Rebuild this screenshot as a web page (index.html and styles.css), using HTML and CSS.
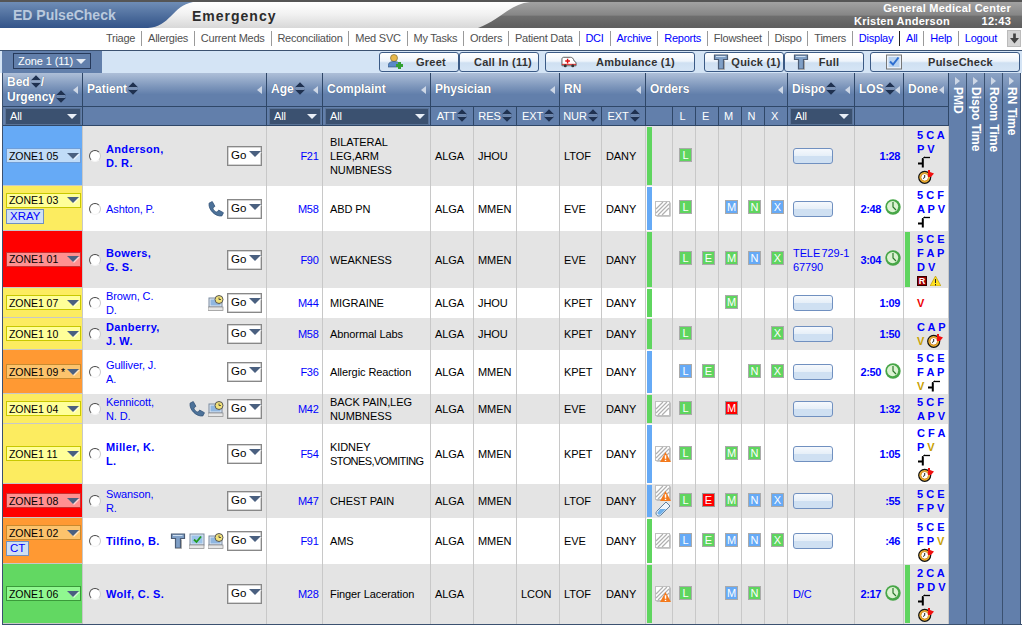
FILE: index.html
```html
<!DOCTYPE html>
<html lang="en">
<head>
<meta charset="utf-8">
<title>ED PulseCheck</title>
<link rel="stylesheet" href="styles.css">
</head>
<body>
<svg class="defs" width="0" height="0">
  <defs>
    <linearGradient id="gBlue" x1="0" y1="0" x2="0" y2="1"><stop offset="0" stop-color="#6f8db6"/><stop offset=".6" stop-color="#4a6a9a"/><stop offset="1" stop-color="#33548a"/></linearGradient>
    <linearGradient id="gGrey" x1="0" y1="0" x2="0" y2="1"><stop offset="0" stop-color="#a2a2a2"/><stop offset=".5" stop-color="#868686"/><stop offset=".55" stop-color="#6e6e6e"/><stop offset="1" stop-color="#5e5e5e"/></linearGradient>
    <symbol id="sort" viewBox="0 0 11 14"><path d="M5.500 0 11 5.500H0ZM5.500 14 0 8.500H11Z" fill="#1f3150"/><path d="M1 6H10M1 8H10" stroke="#9fb2cf" stroke-width=".5"/></symbol>
    <symbol id="phone" viewBox="0 0 15 15"><path d="M1 2 4 .5 6.500 5 4.500 6.500C5 8.500 6.500 10 8.500 10.500L10 8.500 14.500 11 13 14C7 15 0 8 1 2Z" fill="#4d7299" stroke="#2f4f75" stroke-width=".7"/></symbol>
    <symbol id="step" viewBox="0 0 14 12"><path d="M13 1.500H7" fill="none" stroke="#000" stroke-width="1.300"/><path d="M5.800 2.500V11.500M1 7.500H5" fill="none" stroke="#000" stroke-width="2"/><path d="M5 3 7.500 1" stroke="#000" fill="none"/></symbol>
    <symbol id="watch" viewBox="0 0 16 14"><circle cx="6.700" cy="7.300" r="6" fill="#f2b431" stroke="#111" stroke-width="1.200"/><circle cx="6.700" cy="7.300" r="3.800" fill="#fff" stroke="#c77a08" stroke-width=".8"/><path d="M6.700 5V7.500L5 8.500" fill="none" stroke="#222"/><path d="M10 0H12V2L16 3.500 13 7H10Z" fill="#f01010"/></symbol>
    <symbol id="clock" viewBox="0 0 16 16"><circle cx="8" cy="8" r="7.700" fill="#47a647"/><circle cx="7.600" cy="7.600" r="5.600" fill="#dcf2d2"/><path d="M8 3V8L11 11" fill="none" stroke="#2b7a2b" stroke-width="1.200"/></symbol>
    <symbol id="pcclock" viewBox="0 0 16 16"><rect x="1" y="3" width="13" height="9" fill="#dfe8f3" stroke="#7a8aa0"/><rect x="2.500" y="4.500" width="10" height="6" fill="#8fb6e0"/><rect y="12" width="15" height="3.500" fill="#e6e6e6" stroke="#8a8a8a" stroke-width=".7"/><circle cx="11" cy="4.500" r="4" fill="#f2e27a" stroke="#555"/><path d="M11 2.500V4.500H13" fill="none" stroke="#333" stroke-width=".8"/></symbol>
    <symbol id="pccheck" viewBox="0 0 16 16"><rect x="1" y="1" width="14" height="11" fill="#dfe8f3" stroke="#7a8aa0"/><rect x="2.500" y="2.500" width="11" height="8" fill="#9cc3ea"/><path d="M5 6.500 7.500 9 12 3.500" fill="none" stroke="#1f9a1f" stroke-width="1.800"/><rect y="12" width="15" height="3.500" fill="#e6e6e6" stroke="#8a8a8a" stroke-width=".7"/></symbol>
    <symbol id="tee" viewBox="0 0 15 16"><path d="M1 1H14V5.500H10V15H5V5.500H1Z" fill="#7f9fc6" stroke="#4b5c75" stroke-width="1.200"/><path d="M2.500 2.500H12" stroke="#cfe0f2" stroke-width="1"/><path d="M11 6.500V15.500H6" fill="none" stroke="#aaa"/></symbol>
    <symbol id="note" viewBox="0 0 16 16"><rect x="1.500" y="1.500" width="14" height="14" fill="#9a9a9a"/><rect x=".5" y=".5" width="14" height="14" fill="#fff" stroke="#c0c0c0"/><path d="M1 8 8 1M1 12 12 1M3 14 14 3M7 14 14 7" stroke="#b0b0b0" stroke-width="1.200"/></symbol>
    <symbol id="warn" viewBox="0 0 12 11"><path d="M6 0 12 11H0Z" fill="#f47a1c"/><path d="M6 3.500V7.500M6 8.500V10" stroke="#fff" stroke-width="1.600"/></symbol>
    <symbol id="notewarn" viewBox="0 0 16 16"><use href="#note" width="16" height="16"/><use href="#warn" x="5" y="6" width="11" height="10"/></symbol>
    <symbol id="tube" viewBox="0 0 16 16"><path d="M11 1 15 5 6 14C4 16 1 15 1 12 1 11 2 10 2 10Z" fill="#eef4fb" stroke="#5f7f9f"/><path d="M5 8H11L6 13C4.500 14.500 2 13.500 2.500 11.500Z" fill="#6fb0ea"/></symbol>
    <symbol id="yield" viewBox="0 0 11 10"><path d="M5.500 0 11 10H0Z" fill="#ffe020" stroke="#b09000" stroke-width=".6"/><path d="M5.500 3V7M5.500 8V9.500" stroke="#222" stroke-width="1"/></symbol>
    <symbol id="greet" viewBox="0 0 16 16"><circle cx="6" cy="4" r="3.500" fill="#e8b84a" stroke="#6a5a2a" stroke-width=".6"/><path d="M0 13C0 8 3 7.500 6 7.500S12 8 12 13Z" fill="#5a8ac8" stroke="#2f4f75" stroke-width=".6"/><path d="M11.500 8V15M8 11.500H15" stroke="#33a033" stroke-width="3"/></symbol>
    <symbol id="amb" viewBox="0 0 17 12"><path d="M1 3C1 1.500 2 1 3 1H10C12 1 13 2 14 5L16 6.500V10H1Z" fill="#fff" stroke="#555"/><path d="M7 2.500V7.500M4.500 5H9.500" stroke="#e01010" stroke-width="1.500"/><path d="M1 8.500H16" stroke="#e01010"/><circle cx="4.500" cy="10" r="1.600" fill="#333"/><circle cx="12.500" cy="10" r="1.600" fill="#333"/></symbol>
    <symbol id="check" viewBox="0 0 16 15"><rect x=".5" y=".5" width="15" height="14" fill="#e8f0fa" stroke="#777"/><rect x="2.500" y="2.500" width="11" height="10" fill="#b9d3f0"/><path d="M4 7 7 10 12.500 3" fill="none" stroke="#2f6fd0" stroke-width="2"/></symbol>
    <symbol id="down" viewBox="0 0 10 11"><path d="M3.500 0H6.500V5H10L5 11 0 5H3.500Z" fill="#444"/></symbol>
  </defs>
</svg>
<div class="app">
  <header class="titlebar">
    <svg class="title-art" viewBox="0 0 1022 26" preserveAspectRatio="none" aria-hidden="true">
      <path d="M0 0H193C172 4 170 25 148 26H0Z" fill="url(#gBlue)"/>
      <path d="M478 26C500 18 510 2 530 0H1022V26Z" fill="url(#gGrey)"/>
    </svg>
    <div class="brand">ED PulseCheck</div>
    <div class="dept">Emergency</div>
    <div class="site">
      <div>General Medical Center</div>
      <div class="site-line"><span>Kristen Anderson</span><span>12:43</span></div>
    </div>
  </header>
  <nav class="nav">
    <a>Triage</a><a>Allergies</a><a>Current Meds</a><a>Reconciliation</a><a>Med SVC</a><a>My Tasks</a><a>Orders</a><a>Patient Data</a><a class="on">DCI</a><a class="on">Archive</a><a class="on">Reports</a><a>Flowsheet</a><a>Dispo</a><a>Timers</a><a class="on strong">Display</a><a class="on">All</a><a class="on">Help</a><a class="on end">Logout</a>
    <span class="scroll"><svg class="down"><use href="#down"/></svg></span>
  </nav>
  <div class="toolbar">
    <div class="zonebox"><div class="zonesel">Zone 1 (11)<i class="tri-w"></i></div></div>
    <div class="tools">
      <div class="btngroup">
        <button class="btn w80"><svg class="bi"><use href="#greet"/></svg><span>Greet</span></button>
        <button class="btn w80"><span>Call In (11)</span></button>
      </div>
      <button class="btn w150 spaced"><svg class="bi"><use href="#amb"/></svg><span>Ambulance (1)</span></button>
      <div class="btngroup">
        <button class="btn w80"><svg class="bi"><use href="#tee"/></svg><span>Quick (1)</span></button>
        <button class="btn w80 full"><svg class="bi"><use href="#tee"/></svg><span>Full</span></button>
      </div>
      <button class="btn w150"><svg class="bi"><use href="#check"/></svg><span>PulseCheck</span></button>
    </div>
  </div>
  <main class="main">
    <table class="board">
      <colgroup>
        <col class="c-bed"><col class="c-pat"><col class="c-age"><col class="c-com">
        <col class="c-43"><col class="c-43"><col class="c-43"><col class="c-nur"><col class="c-ext">
        <col class="c-mk"><col class="c-o"><col class="c-o"><col class="c-o"><col class="c-o"><col class="c-o">
        <col class="c-dis"><col class="c-los"><col class="c-done">
      </colgroup>
      <thead>
        <tr class="th1">
          <th><div class="hd"><span>Bed<svg class="so"><use href="#sort"/></svg>/<br>Urgency<svg class="so"><use href="#sort"/></svg></span><i class="col"></i></div></th>
          <th><div class="hd"><span>Patient<svg class="so"><use href="#sort"/></svg></span><i class="col"></i></div></th>
          <th><div class="hd"><span>Age<svg class="so"><use href="#sort"/></svg></span><i class="col"></i></div></th>
          <th><div class="hd"><span>Complaint</span><i class="col"></i></div></th>
          <th colspan="3"><div class="hd"><span>Physician</span><i class="col"></i></div></th>
          <th colspan="2"><div class="hd"><span>RN</span><i class="col"></i></div></th>
          <th colspan="6"><div class="hd"><span>Orders</span><i class="col"></i></div></th>
          <th><div class="hd"><span>Dispo<svg class="so"><use href="#sort"/></svg></span><i class="col"></i></div></th>
          <th><div class="hd"><span>LOS<svg class="so"><use href="#sort"/></svg></span><i class="col"></i></div></th>
          <th><div class="hd"><span>Done</span><i class="col"></i></div></th>
        </tr>
        <tr class="th2">
          <th><div class="flt">All<i class="tri-w"></i></div></th>
          <th></th>
          <th><div class="flt">All<i class="tri-w"></i></div></th>
          <th><div class="flt">All<i class="tri-w"></i></div></th>
          <th>ATT<svg class="so"><use href="#sort"/></svg></th>
          <th>RES<svg class="so"><use href="#sort"/></svg></th>
          <th>EXT<svg class="so"><use href="#sort"/></svg></th>
          <th>NUR<svg class="so"><use href="#sort"/></svg></th>
          <th>EXT<svg class="so"><use href="#sort"/></svg></th>
          <th></th><th class="oh">L</th><th class="oh">E</th><th class="oh">M</th><th class="oh">N</th><th class="oh">X</th>
          <th><div class="flt">All<i class="tri-w"></i></div></th>
          <th></th><th></th>
        </tr>
      </thead>
      <tbody>
        <tr class="h60 alt">
          <td class="bed blue"><div class="bedwrap"><div class="bsel">ZONE1 05<i class="tri"></i></div></div></td>
          <td><div class="pat"><i class="radio"></i><a class="nm b">Anderson,<br>D. R.</a><div class="go">Go<i class="tri"></i></div></div></td>
          <td class="age">F21</td>
          <td class="txt">BILATERAL<br>LEG,ARM<br>NUMBNESS</td>
          <td class="doc">ALGA</td><td class="doc">JHOU</td><td class="doc"></td><td class="doc">LTOF</td><td class="doc">DANY</td>
          <td class="mk gbar"></td>
          <td><b class="bd g">L</b></td><td></td><td></td><td></td><td></td>
          <td class="dis"><span class="dbtn"></span></td>
          <td class="los"><div class="lw">1:28</div></td>
          <td class="done"><div>5 C A</div><div>P V</div><div><svg class="st"><use href="#step"/></svg></div><div><svg class="wa"><use href="#watch"/></svg></div></td>
        </tr>
        <tr class="h45">
          <td class="bed yel"><div class="bedwrap"><div class="bsel">ZONE1 03<i class="tri"></i></div><div class="tag">XRAY</div></div></td>
          <td><div class="pat"><i class="radio"></i><a class="nm">Ashton, P.</a><div class="ics"><svg class="ic"><use href="#phone"/></svg></div><div class="go">Go<i class="tri"></i></div></div></td>
          <td class="age">M58</td>
          <td class="txt">ABD PN</td>
          <td class="doc">ALGA</td><td class="doc">MMEN</td><td class="doc"></td><td class="doc">EVE</td><td class="doc">DANY</td>
          <td class="mk bbar"><svg class="ni"><use href="#note"/></svg></td>
          <td><b class="bd g">L</b></td><td></td><td><b class="bd b">M</b></td><td><b class="bd g">N</b></td><td><b class="bd b">X</b></td>
          <td class="dis"><span class="dbtn"></span></td>
          <td class="los"><div class="lw">2:48<svg class="ck"><use href="#clock"/></svg></div></td>
          <td class="done"><div>5 C F</div><div>A P V</div><div><svg class="st"><use href="#step"/></svg></div></td>
        </tr>
        <tr class="h57 alt">
          <td class="bed red"><div class="bedwrap"><div class="bsel">ZONE1 01<i class="tri"></i></div></div></td>
          <td><div class="pat"><i class="radio"></i><a class="nm b">Bowers,<br>G. S.</a><div class="go">Go<i class="tri"></i></div></div></td>
          <td class="age">F90</td>
          <td class="txt">WEAKNESS</td>
          <td class="doc">ALGA</td><td class="doc">MMEN</td><td class="doc"></td><td class="doc">EVE</td><td class="doc">DANY</td>
          <td class="mk gbar"></td>
          <td><b class="bd g">L</b></td><td><b class="bd g">E</b></td><td><b class="bd g">M</b></td><td><b class="bd b">N</b></td><td><b class="bd g">X</b></td>
          <td class="dis dtxt">TELE 729-1<br>67790</td>
          <td class="los"><div class="lw">3:04<svg class="ck"><use href="#clock"/></svg></div></td>
          <td class="done gbar"><div>5 C E</div><div>F A P</div><div>D V</div><div class="fl"><span class="rbox">R</span><svg class="yi"><use href="#yield"/></svg></div></td>
        </tr>
        <tr class="h30">
          <td class="bed yel"><div class="bedwrap"><div class="bsel">ZONE1 07<i class="tri"></i></div></div></td>
          <td><div class="pat"><i class="radio"></i><a class="nm">Brown, C.<br>D.</a><div class="ics"><svg class="ic"><use href="#pcclock"/></svg></div><div class="go">Go<i class="tri"></i></div></div></td>
          <td class="age">M44</td>
          <td class="txt">MIGRAINE</td>
          <td class="doc">ALGA</td><td class="doc">JHOU</td><td class="doc"></td><td class="doc">KPET</td><td class="doc">DANY</td>
          <td class="mk gbar"></td>
          <td></td><td></td><td><b class="bd g">M</b></td><td></td><td></td>
          <td class="dis"><span class="dbtn"></span></td>
          <td class="los"><div class="lw">1:09</div></td>
          <td class="done"><div><span class="rd">V</span></div></td>
        </tr>
        <tr class="h32 alt">
          <td class="bed yel"><div class="bedwrap"><div class="bsel">ZONE1 10<i class="tri"></i></div></div></td>
          <td><div class="pat"><i class="radio"></i><a class="nm b">Danberry,<br>J. W.</a><div class="go">Go<i class="tri"></i></div></div></td>
          <td class="age">M58</td>
          <td class="txt">Abnormal Labs</td>
          <td class="doc">ALGA</td><td class="doc">JHOU</td><td class="doc"></td><td class="doc">KPET</td><td class="doc">DANY</td>
          <td class="mk gbar"></td>
          <td><b class="bd g">L</b></td><td></td><td></td><td></td><td><b class="bd g">X</b></td>
          <td class="dis"><span class="dbtn"></span></td>
          <td class="los"><div class="lw">1:50</div></td>
          <td class="done"><div>C A P</div><div class="fl"><span class="au">V</span><svg class="wa"><use href="#watch"/></svg></div></td>
        </tr>
        <tr class="h44">
          <td class="bed org"><div class="bedwrap"><div class="bsel">ZONE1 09 *<i class="tri"></i></div></div></td>
          <td><div class="pat"><i class="radio"></i><a class="nm">Gulliver, J.<br>A.</a><div class="go">Go<i class="tri"></i></div></div></td>
          <td class="age">F36</td>
          <td class="txt">Allergic Reaction</td>
          <td class="doc">ALGA</td><td class="doc">MMEN</td><td class="doc"></td><td class="doc">KPET</td><td class="doc">DANY</td>
          <td class="mk bbar"></td>
          <td><b class="bd b">L</b></td><td><b class="bd g">E</b></td><td></td><td><b class="bd g">N</b></td><td><b class="bd g">X</b></td>
          <td class="dis"><span class="dbtn"></span></td>
          <td class="los"><div class="lw">2:50<svg class="ck"><use href="#clock"/></svg></div></td>
          <td class="done"><div>5 C E</div><div>F A P</div><div class="fl"><span class="au">V</span><svg class="st"><use href="#step"/></svg></div></td>
        </tr>
        <tr class="h30 alt">
          <td class="bed yel"><div class="bedwrap"><div class="bsel">ZONE1 04<i class="tri"></i></div></div></td>
          <td><div class="pat"><i class="radio"></i><a class="nm">Kennicott,<br>N. D.</a><div class="ics"><svg class="ic"><use href="#phone"/></svg><svg class="ic"><use href="#pcclock"/></svg></div><div class="go">Go<i class="tri"></i></div></div></td>
          <td class="age">M42</td>
          <td class="txt">BACK PAIN,LEG<br>NUMBNESS</td>
          <td class="doc">ALGA</td><td class="doc">MMEN</td><td class="doc"></td><td class="doc">EVE</td><td class="doc">DANY</td>
          <td class="mk gbar"><svg class="ni"><use href="#note"/></svg></td>
          <td><b class="bd g">L</b></td><td></td><td><b class="bd r">M</b></td><td></td><td></td>
          <td class="dis"><span class="dbtn"></span></td>
          <td class="los"><div class="lw">1:32</div></td>
          <td class="done"><div>5 C F</div><div>A P V</div></td>
        </tr>
        <tr class="h60">
          <td class="bed yel"><div class="bedwrap"><div class="bsel">ZONE1 11<i class="tri"></i></div></div></td>
          <td><div class="pat"><i class="radio"></i><a class="nm b">Miller, K.<br>L.</a><div class="go">Go<i class="tri"></i></div></div></td>
          <td class="age">F54</td>
          <td class="txt">KIDNEY<br><span class="tight">STONES,VOMITING</span></td>
          <td class="doc">ALGA</td><td class="doc">MMEN</td><td class="doc"></td><td class="doc">KPET</td><td class="doc">DANY</td>
          <td class="mk bbar"><svg class="ni"><use href="#notewarn"/></svg></td>
          <td><b class="bd g">L</b></td><td></td><td><b class="bd g">M</b></td><td><b class="bd g">N</b></td><td></td>
          <td class="dis"><span class="dbtn"></span></td>
          <td class="los"><div class="lw">1:05</div></td>
          <td class="done"><div>C F A</div><div>P <span class="au">V</span></div><div><svg class="st"><use href="#step"/></svg></div><div><svg class="wa"><use href="#watch"/></svg></div></td>
        </tr>
        <tr class="h34 alt">
          <td class="bed red"><div class="bedwrap"><div class="bsel">ZONE1 08<i class="tri"></i></div></div></td>
          <td><div class="pat"><i class="radio"></i><a class="nm">Swanson,<br>R.</a><div class="go">Go<i class="tri"></i></div></div></td>
          <td class="age">M47</td>
          <td class="txt">CHEST PAIN</td>
          <td class="doc">ALGA</td><td class="doc">MMEN</td><td class="doc"></td><td class="doc">LTOF</td><td class="doc">DANY</td>
          <td class="mk bbar"><svg class="ni"><use href="#notewarn"/></svg><svg class="ni"><use href="#tube"/></svg></td>
          <td><b class="bd g">L</b></td><td><b class="bd r">E</b></td><td><b class="bd g">M</b></td><td><b class="bd b">N</b></td><td><b class="bd b">X</b></td>
          <td class="dis"><span class="dbtn"></span></td>
          <td class="los"><div class="lw">:55</div></td>
          <td class="done"><div>5 C E</div><div>F P V</div></td>
        </tr>
        <tr class="h46">
          <td class="bed org"><div class="bedwrap"><div class="bsel">ZONE1 02<i class="tri"></i></div><div class="tag">CT</div></div></td>
          <td><div class="pat"><i class="radio"></i><a class="nm b">Tilfino, B.</a><div class="ics"><svg class="ic"><use href="#tee"/></svg><svg class="ic"><use href="#pccheck"/></svg><svg class="ic"><use href="#pcclock"/></svg></div><div class="go">Go<i class="tri"></i></div></div></td>
          <td class="age">F91</td>
          <td class="txt">AMS</td>
          <td class="doc">ALGA</td><td class="doc">MMEN</td><td class="doc"></td><td class="doc">EVE</td><td class="doc">DANY</td>
          <td class="mk gbar"><svg class="ni"><use href="#note"/></svg></td>
          <td><b class="bd b">L</b></td><td><b class="bd g">E</b></td><td><b class="bd b">M</b></td><td><b class="bd b">N</b></td><td><b class="bd g">X</b></td>
          <td class="dis"><span class="dbtn"></span></td>
          <td class="los"><div class="lw">:46</div></td>
          <td class="done"><div>5 C E</div><div>F P <span class="au">V</span></div><div><svg class="wa"><use href="#watch"/></svg></div></td>
        </tr>
        <tr class="h60 alt">
          <td class="bed grn"><div class="bedwrap"><div class="bsel">ZONE1 06<i class="tri"></i></div></div></td>
          <td><div class="pat"><i class="radio"></i><a class="nm b">Wolf, C. S.</a><div class="go">Go<i class="tri"></i></div></div></td>
          <td class="age">M28</td>
          <td class="txt">Finger Laceration</td>
          <td class="doc">ALGA</td><td class="doc"></td><td class="doc">LCON</td><td class="doc">LTOF</td><td class="doc">DANY</td>
          <td class="mk gbar"><svg class="ni"><use href="#notewarn"/></svg></td>
          <td><b class="bd g">L</b></td><td></td><td><b class="bd b">M</b></td><td><b class="bd g">N</b></td><td></td>
          <td class="dis dtxt">D/C</td>
          <td class="los"><div class="lw">2:17<svg class="ck"><use href="#clock"/></svg></div></td>
          <td class="done gbar"><div>2 C A</div><div>P D V</div><div><svg class="st"><use href="#step"/></svg></div><div><svg class="wa"><use href="#watch"/></svg></div></td>
        </tr>
      </tbody>
    </table>
    <aside class="strips">
      <div class="strip"><i class="exp"></i><span>PMD</span></div>
      <div class="strip"><i class="exp"></i><span>Dispo Time</span></div>
      <div class="strip"><i class="exp"></i><span>Room Time</span></div>
      <div class="strip"><i class="exp"></i><span>RN Time</span></div>
    </aside>
  </main>
</div>
</body>
</html>
```

FILE: styles.css
```css
* { box-sizing: border-box; }
html, body { margin: 0; padding: 0; background: #fff; }
body { font: 11px/14px "Liberation Sans", Arial, sans-serif; color: #000; overflow: hidden; letter-spacing: -.08px; }
.defs { position: absolute; }
.app { width: 1022px; height: 627px; border-top: 2px solid #555; display: flex; flex-direction: column; }

/* title bar */
.titlebar { position: relative; height: 26px; flex: none; display: flex; align-items: center; background: linear-gradient(#fff 0, #f2f2f2 45%, #d8d8d8 100%); }
.title-art { position: absolute; left: 0; top: 0; width: 100%; height: 100%; }
.brand { position: relative; margin-left: 13px; width: 179px; font: bold 14px/20px "Liberation Sans", sans-serif; letter-spacing: 0; color: #b9c9dd; }
.dept { position: relative; top: 1px; font: bold 14px/20px "Liberation Sans", sans-serif; letter-spacing: 1px; color: #2c2c2c; }
.site { position: relative; margin-left: auto; margin-right: 11px; width: 157px; color: #fff; font: bold 11px/13px "Liberation Sans", sans-serif; text-align: right; letter-spacing: .25px; }
.site-line { display: flex; justify-content: space-between; }

/* nav */
.nav { height: 23px; flex: none; display: flex; align-items: center; justify-content: flex-end; padding: 0 1px 1px 0; border-bottom: 1px solid #3b5170; }
.nav a { padding: 0 5.9px; line-height: 15px; color: #505050; border-right: 1px solid #9a9a9a; letter-spacing: -.24px; }
.nav a.on { color: #0000ff; }
.nav a.strong { border-right-color: #222; }
.nav a.end { border-right: 0; padding-right: 10px; }
.scroll { width: 14px; height: 17px; background: #d4d4d4; border: 1px solid #bbb; display: flex; justify-content: center; align-items: center; }
.down { width: 9px; height: 11px; }

/* toolbar */
.toolbar { height: 22px; flex: none; display: flex; padding-left: 2px; background: #d4e4f5; }
.zonebox { width: 100px; background: #627fab; padding: 2px 0 0 11px; }
.zonesel { width: 78px; height: 16px; border: 1px solid #26395a; color: #fff; line-height: 14px; padding-left: 4px; display: flex; align-items: center; gap: 3px; font-size: 11px; white-space: nowrap; background: #627fab; }
.tools { flex: 1; display: flex; justify-content: flex-end; gap: 6px; padding: 1px 2px 1px 0; }
.btngroup { display: flex; }
.btn { height: 20px; padding: 0 0 0 8px; display: flex; align-items: center; border: 1px solid #3b5a85; border-radius: 3px; background: linear-gradient(#fff, #eef4fb 45%, #cfe0f2 55%, #d6e5f5); font: bold 11px/14px "Liberation Sans", sans-serif; color: #333; letter-spacing: .25px; }
.btn span { flex: 1; text-align: center; white-space: nowrap; }
.w80 { width: 80px; }
.w150 { width: 150px; padding-left: 15px; }
.spaced { margin-right: 3px; }
.full { padding-right: 14px; }
.bi { width: 16px; height: 16px; flex: none; }

/* main */
.main { flex: 1; display: flex; margin-left: 2px; margin-bottom: 2px; border-left: 1px solid #3b5170; border-bottom: 1px solid #3b5170; }
.board { width: 946px; table-layout: fixed; border-collapse: separate; border-spacing: 0; height: 551px; }
.c-bed { width: 80px; } .c-pat { width: 184px; } .c-age { width: 56px; } .c-com { width: 108px; }
.c-43 { width: 43px; } .c-nur { width: 42px; } .c-ext { width: 44px; } .c-mk { width: 27px; } .c-o { width: 23px; }
.c-dis { width: 67px; } .c-los { width: 49px; } .c-done { width: 45px; }

/* header */
th { padding: 0; border-right: 1px solid #2f4768; border-bottom: 1px solid #2f4768; color: #fff; font-weight: normal; }
.th1 { height: 34px; }
.th1 th { background: linear-gradient(#aebfd8, #7e97bc 40%, #627fab 65%); font-weight: bold; font-size: 12px; line-height: 15px; text-align: left; text-shadow: 0 0 1px #3b5170; letter-spacing: 0; }
.th2 { height: 19px; }
.th2 th { background: #627fab; font-size: 11px; text-align: center; white-space: nowrap; letter-spacing: -.1px; }
.th2 .oh { padding-right: 3px; }
.hd { display: flex; align-items: center; justify-content: space-between; padding: 0 4px 0 4px; }
.hd span { white-space: nowrap; }
.so { width: 10px; height: 13px; vertical-align: -2px; margin-left: 1px; }
.col { flex: none; border: 4px solid transparent; border-right: 5px solid #cdd7e6; border-left: 0; }
.exp { display: block; border: 4px solid transparent; border-left: 5px solid #cdd7e6; border-right: 0; }
.flt { margin: 0 1px 0 2px; height: 17px; background: #3b5170; border: 1px solid #5a7396; display: flex; align-items: center; justify-content: space-between; padding: 0 3px 0 4px; text-align: left; }
.tri-w { border: 5px solid transparent; border-top: 5px solid #e8eef6; border-bottom: 0; margin-top: 1px; }

/* rows */
td { padding: 0; border-right: 1px solid #c8c8c8; vertical-align: middle; }
.alt { background: #e4e4e4; }
.h60 { height: 60px; } .h57 { height: 57px; } .h46 { height: 46px; } .h45 { height: 45px; } .h44 { height: 44px; }
.h34 { height: 34px; } .h32 { height: 32px; } .h30 { height: 30px; }

.bed { border-bottom: 1px solid #c8c8c8; }
.bedwrap { padding: 0 1px 0 3px; display: flex; flex-direction: column; align-items: flex-start; gap: 1px; }
.bsel { width: 75px; height: 15px; display: flex; align-items: center; justify-content: space-between; padding: 0 1px 0 2px; border: 1px solid; font-size: 10.5px; letter-spacing: -.05px; white-space: nowrap; }
.tri { flex: none; border: 6px solid transparent; border-top: 6px solid #4a6080; border-bottom: 0; filter: drop-shadow(1px 1px 0 rgba(255,255,255,.6)); }
.tag { border: 1px solid #7090c0; background: #d0e0f4; color: #0000ff; font-size: 11.5px; line-height: 13px; padding: 0 3px; height: 15px; letter-spacing: 0; }
.blue { background: #66aaf6; } .blue .bsel { background: #c0dcf8; border-color: #6f9ed8; }
.yel { background: #fcec60; } .yel .bsel { background: #ffff99; border-color: #c8c800; }
.red { background: #ff0000; } .red .bsel { background: #ff9090; border-color: #c83030; }
.org { background: #ff9933; } .org .bsel { background: #fcc36c; border-color: #c88a30; }
.grn { background: #62d862; } .grn .bsel { background: #90f890; border-color: #3a9a3a; }

.pat { display: flex; align-items: center; padding: 0 4px 0 6px; }
.radio { flex: none; width: 12px; height: 12px; border-radius: 50%; background: #fff; border: 1.5px solid; border-color: #444 #ccc #f4f4f4 #555; margin-right: 5px; }
.nm { color: #0000ff; white-space: nowrap; letter-spacing: -.1px; }
.nm.b { font-weight: bold; font-size: 11px; letter-spacing: .35px; }
.ics { margin-left: auto; display: flex; gap: 3px; margin-right: 3px; align-items: center; }
.ic { width: 16px; height: 16px; }
.go { flex: none; width: 35px; height: 20px; margin-left: auto; background: #fff; border: 1px solid #888; font-size: 11.5px; line-height: 14px; padding: 1px 0 0 3px; display: flex; gap: 3px; align-items: flex-start; box-shadow: inset 0 0 0 .5px #aaa; letter-spacing: 0; }
.go .tri { margin-top: 3px; }
.ics + .go { margin-left: 0; }

.age { text-align: right; padding-right: 3.5px; color: #0000ff; letter-spacing: -.3px; }
.txt { padding-left: 7px; line-height: 14px; }
.tight { letter-spacing: -.6px; }
.doc { padding-left: 4px; }
.mk { padding-left: 9px; }
.ni { display: block; width: 16px; height: 16px; }
.gbar { background: linear-gradient(#5fd55f, #5fd55f) 1px 1px / 5px calc(100% - 2px) no-repeat; }
.bbar { background: linear-gradient(#66aaf6, #66aaf6) 1px 1px / 5px calc(100% - 2px) no-repeat; }
.bd { display: block; width: 13px; height: 14px; margin: -3px 0 0 6px; border: 1px solid #aaa; color: #fff; font-weight: normal; font-size: 11px; line-height: 12px; text-align: center; letter-spacing: 0; }
.bd.g { background: #5fd55f; } .bd.b { background: #66aaf6; } .bd.r { background: #ff0000; border-color: #999; }
.dis { padding-left: 5px; }
.dtxt { color: #0000ff; line-height: 14px; font-size: 11px; white-space: nowrap; letter-spacing: -.1px; word-spacing: -1.5px; }
.dbtn { display: block; width: 40px; height: 16px; border: 1px solid #7090c0; border-radius: 3px; background: linear-gradient(#f6f9fd, #e6eff8 50%, #cfe0f2 52%); }
.lw { display: flex; justify-content: flex-end; align-items: center; gap: 4px; padding-right: 3px; color: #0000ff; font-weight: bold; font-size: 11px; letter-spacing: -.35px; }
.ck { width: 16px; height: 16px; flex: none; margin-top: -3px; margin-right: -1px; }
.done { padding-left: 13px; color: #0000ff; font-weight: bold; font-size: 11px; line-height: 14px; white-space: nowrap; letter-spacing: 0; word-spacing: 0; }
.done > div { height: 14px; }
.fl { display: flex; align-items: center; gap: 3px; }
.st { width: 14px; height: 12px; display: block; }
.wa { width: 16px; height: 14px; display: block; margin-left: 1px; }
.fl .wa { margin-left: 0; }
.au { color: #c8a000; } .rd { color: #ee0000; }
.rbox { display: block; width: 10px; height: 10px; background: #a00000; color: #fff; font-size: 9px; line-height: 9px; text-align: center; border: 1px solid #300; }
.yi { width: 11px; height: 10px; }

/* vertical strips */
.strips { display: flex; width: 72px; }
.strip { width: 18px; background: linear-gradient(#8ba2c4, #627fab 28px); border-right: 1px solid #3b5170; padding: 4px 0 0 6px; color: #fff; font: bold 12px/14px "Liberation Sans", sans-serif; }
.strip span { display: block; writing-mode: vertical-rl; margin: 2px 0 0 -4px; white-space: nowrap; letter-spacing: 0; }
```
